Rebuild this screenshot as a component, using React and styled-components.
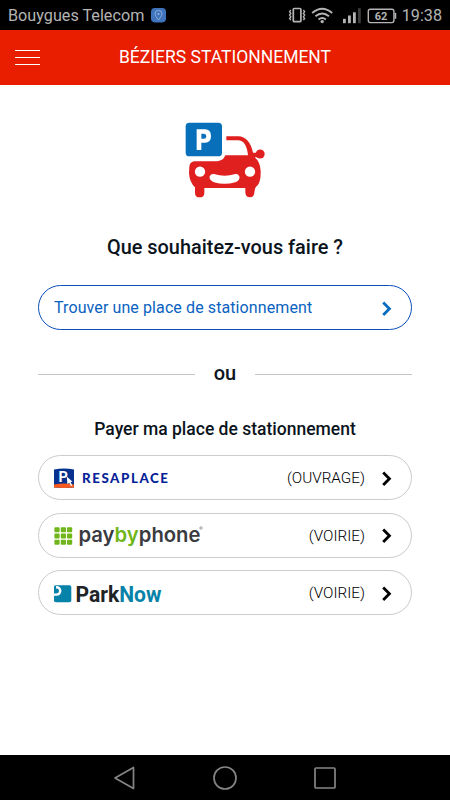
import React from 'react'
import styled, { createGlobalStyle } from 'styled-components'

const red = '#e91d00'
const blue = '#0a4fb8'
const ink = '#0b141c'
const silver = '#b4b4b4'

const GlobalStyle = createGlobalStyle`
  * {
    box-sizing: border-box;
  }

  body {
    margin: 0;
    background: #fff;
    font-family: Roboto, 'Liberation Sans', sans-serif;
  }

  svg {
    display: block;
    flex: none;
  }
`

const Screen = styled.div`
  display: flex;
  flex-direction: column;
  width: 450px;
  height: 800px;
  overflow: hidden;
`

const StatusBar = styled.div`
  display: flex;
  align-items: center;
  height: 30px;
  padding: 1px 8px 0;
  background: #000;
  color: ${silver};
`

const Carrier = styled.span`
  margin-right: 7px;
  font-size: 16.2px;
  line-height: 29px;
`

const StatusIcons = styled.div`
  display: flex;
  align-items: center;
  margin-left: auto;
`

const Clock = styled.span`
  margin-left: 4px;
  font-size: 16.2px;
  line-height: 29px;
`

const Header = styled.header`
  display: grid;
  grid-template-columns: 40px 1fr 40px;
  align-items: center;
  height: 55px;
  padding: 0 15px;
  background: ${red};
`

const Burger = styled.button`
  display: flex;
  flex-direction: column;
  justify-content: space-between;
  width: 25px;
  height: 15px;
  padding: 0;
  border: 0;
  background: none;
`

const BurgerLine = styled.span`
  height: 1px;
  background: #fff;
`

const Title = styled.h1`
  margin: -1px 0 0;
  color: #fff;
  font-size: 17.5px;
  font-weight: 400;
  line-height: 24px;
  text-align: center;
  white-space: nowrap;
`

const Content = styled.main`
  display: flex;
  flex: 1;
  flex-direction: column;
  align-items: center;
  padding: 25px 38px 0;
`

const Question = styled.h2`
  margin: 25px 0 24px;
  color: ${ink};
  font-size: 19.9px;
  font-weight: 500;
  line-height: 26px;
  white-space: nowrap;
`

const Pill = styled.button`
  display: flex;
  align-items: center;
  justify-content: space-between;
  width: 374px;
  height: 45px;
  padding: 0 18px 0 15px;
  border: 1px solid ${p => (p.$primary ? blue : '#cbcbcb')};
  border-radius: 23px;
  background: #fff;
  color: ${p => (p.$primary ? '#0a62c0' : '#111')};
  font-family: inherit;
`

const PillLabel = styled.span`
  font-size: 16px;
  letter-spacing: 0.1px;
  white-space: nowrap;
`

const Kind = styled.span`
  margin: 1px 16px 0 auto;
  color: #000;
  font-size: 15.3px;
  font-weight: 300;
`

const Separator = styled.div`
  display: flex;
  align-items: center;
  width: 100%;
  margin-top: 30px;
  color: ${ink};
  font-size: 20px;
  font-weight: 500;
  line-height: 26px;
`

const Rule = styled.span`
  flex: 1;
  height: 1px;
  margin-top: 2px;
  background: #c4c4c4;
`

const Or = styled.span`
  width: 60px;
  text-align: center;
`

const Subtitle = styled.h3`
  margin: 31px 0 14px;
  color: ${ink};
  font-size: 17.5px;
  font-weight: 500;
  line-height: 24px;
  white-space: nowrap;
`

const Providers = styled.div`
  display: flex;
  flex-direction: column;
  gap: 12.5px;
`

const NavBar = styled.nav`
  display: flex;
  align-items: center;
  justify-content: center;
  gap: 76px;
  height: 45px;
  background: #000;
`

const Chevron = ({ color = '#000' }) => (
  <svg width="12" height="16" viewBox="0 0 12 16">
    <path d="M2.2 2.6 L8.4 8.8 L2.2 15" fill="none" stroke={color} strokeWidth="2.8" />
  </svg>
)

const PinBadge = () => (
  <svg width="15" height="15" viewBox="0 0 15 15">
    <rect width="15" height="14.4" rx="3.8" fill="#3f74bd" />
    <path
      d="M7.5 12 C5.7 9.4 4 7.6 4 5.9 a3.5 3.5 0 0 1 7 0 C11 7.6 9.3 9.4 7.5 12 Z"
      fill="none"
      stroke="#9dbbe0"
      strokeWidth="0.8"
    />
    <circle cx="7.5" cy="6" r="1" fill="#9dbbe0" />
  </svg>
)

// vibrate, wifi, signal and battery
const PhoneStatus = () => (
  <svg width="110" height="20" viewBox="0 0 110 20" fill="none" stroke={silver}>
    <rect x="5.3" y="2.5" width="7.6" height="13.2" rx="1" strokeWidth="1.7" />
    <path d="M2.8 4 l-1.2 1.7 1.2 1.7 -1.2 1.7 1.2 1.7 -1.2 1.7 1.2 1.7" strokeWidth="1.4" />
    <path d="M15.4 4 l1.2 1.7 -1.2 1.7 1.2 1.7 -1.2 1.7 1.2 1.7 -1.2 1.7" strokeWidth="1.4" />
    <path
      d="M24.2 7 Q34.2 -1.7 44.2 7 M27.4 10.3 Q34.2 4.6 41 10.3 M30.5 13.4 Q34.2 10.4 37.9 13.4"
      strokeWidth="1.9"
    />
    <circle cx="34.2" cy="15.6" r="1.7" fill={silver} stroke="none" />
    <g fill={silver} stroke="none">
      <rect x="55" y="12.8" width="2.8" height="4.4" />
      <rect x="60" y="9.5" width="2.8" height="7.7" />
      <rect x="65" y="6.3" width="2.8" height="10.9" />
      <rect x="70" y="2.2" width="2.8" height="15" fill="#3c3c3c" />
    </g>
    <rect x="80.3" y="3.2" width="25.6" height="13.4" rx="2" strokeWidth="1.4" />
    <path d="M107.4 6.8 v6" strokeWidth="1.7" />
    <text
      x="93.1"
      y="13.8"
      fill={silver}
      stroke="none"
      fontSize="11"
      fontWeight="700"
      textAnchor="middle"
    >
      62
    </text>
  </svg>
)

const CarLogo = () => (
  <svg width="110" height="100" viewBox="0 0 330 300">
    <path
      d="M58 170 Q59 157 72 154 L142 154 Q160 152 166 136 L234 136 Q229 91 204 91 L169 91 L169 79 L205 79 Q238 80 249 128 L262 128 L262 142 L254 142 Q270 155 272 182 Q273 213 263 226 Q253 233 253 247 Q253 262 240 262 Q226 262 226 247 L226 234 L103 234 L103 248 Q103 262 89 262 Q75 262 75 248 L75 232 Q59 218 57 190 Z"
      fill="#e01f1f"
    />
    <circle cx="270.5" cy="132" r="13.5" fill="#e01f1f" />
    <circle cx="90" cy="185" r="15.5" fill="#fff" />
    <circle cx="240" cy="185" r="15.5" fill="#fff" />
    <path
      d="M132 192 Q164 203 196 192 Q205 191 208 199 Q211 211 196 217 Q164 226 132 217 Q116 210 119 199 Q123 190 132 192 Z"
      fill="#fff"
    />
    <rect x="47" y="38" width="109" height="101" rx="11" fill="#0870ba" />
    <path
      d="M80 58 H105 Q123 59 123 78 Q123 98 105 98 H94 V120 H80 Z M94 71 V86 H102 Q109 86 109 78.5 Q109 71 102 71 Z"
      fill="#fff"
      fillRule="evenodd"
    />
  </svg>
)

const ResaplaceLogo = () => (
  <svg width="118" height="24" viewBox="0 0 118 24">
    <path d="M0 3.5 Q10 1.5 20 3.5 V21.5 Q10 22.3 0 21.5 Z" fill="#06318f" />
    <path d="M0 18.5 Q10 16.6 20 18.5 V21.5 Q10 22.3 0 21.5 Z" fill="#fa5a1e" />
    <text x="4.5" y="15.8" fill="#fff" fontSize="14.5" fontWeight="700">
      P
    </text>
    <path
      d="M12.8 10.4 L18.5 15.7 L16.6 16 L18.3 19.4 L16.9 20.1 L15.2 16.7 L13.4 18.3 Z"
      fill="#fff"
    />
    <text
      x="28"
      y="17.4"
      fill="#071f97"
      fontFamily="Lato, sans-serif"
      fontSize="13.3"
      fontWeight="900"
      textLength="86"
    >
      RESAPLACE
    </text>
  </svg>
)

const PayByPhoneLogo = () => (
  <svg width="152" height="32" viewBox="0 -4 152 32">
    <g fill="#70b519">
      {[4.2, 10.5, 16.7].map(y =>
        [0.4, 6.8, 13].map(x => <rect key={`${x}-${y}`} x={x} y={y} width="5.2" height="5" rx="0.9" />)
      )}
    </g>
    <text
      x="24.5"
      y="18.8"
      fill="#393b3f"
      fontFamily="Inter, sans-serif"
      fontSize="20.5"
      fontWeight="600"
      textLength="122"
      lengthAdjust="spacingAndGlyphs"
    >
      pay
      <tspan fill="#70b519">by</tspan>
      phone
    </text>
    <circle cx="147" cy="5" r="1.2" fill="none" stroke="#888" strokeWidth="0.8" />
  </svg>
)

const ParkNowLogo = () => (
  <svg width="110" height="28" viewBox="0 -2 110 28">
    <rect y="4.2" width="17.3" height="17" rx="1.8" fill="#0782a8" />
    <path d="M0 6.3 H2.6 A3.6 3.6 0 0 1 2.6 13.6 H0" fill="none" stroke="#fff" strokeWidth="2.4" />
    <path d="M0 5 H2 V12 H0 Z" fill="#0782a8" />
    <text
      x="21.5"
      y="20.8"
      fill="#202326"
      fontSize="22.5"
      fontWeight="700"
      textLength="86"
      lengthAdjust="spacingAndGlyphs"
    >
      Park
      <tspan fill="#0782a8">Now</tspan>
    </text>
  </svg>
)

const providers = [
  { name: 'resaplace', kind: '(OUVRAGE)', Logo: ResaplaceLogo },
  { name: 'paybyphone', kind: '(VOIRIE)', Logo: PayByPhoneLogo },
  { name: 'parknow', kind: '(VOIRIE)', Logo: ParkNowLogo }
]

const NavIcon = ({ children }) => (
  <svg width="24" height="24" viewBox="0 0 24 24" fill="none" stroke="#858585" strokeWidth="1.7">
    {children}
  </svg>
)

const App = () => (
  <Screen>
    <GlobalStyle />
    <StatusBar>
      <Carrier>Bouygues Telecom</Carrier>
      <PinBadge />
      <StatusIcons>
        <PhoneStatus />
        <Clock>19:38</Clock>
      </StatusIcons>
    </StatusBar>
    <Header>
      <Burger aria-label="Menu">
        <BurgerLine />
        <BurgerLine />
        <BurgerLine />
      </Burger>
      <Title>BÉZIERS STATIONNEMENT</Title>
    </Header>
    <Content>
      <CarLogo />
      <Question>Que souhaitez-vous faire ?</Question>
      <Pill $primary>
        <PillLabel>Trouver une place de stationnement</PillLabel>
        <Chevron color="#0a6cc0" />
      </Pill>
      <Separator>
        <Rule />
        <Or>ou</Or>
        <Rule />
      </Separator>
      <Subtitle>Payer ma place de stationnement</Subtitle>
      <Providers>
        {providers.map(({ name, kind, Logo }) => (
          <Pill key={name}>
            <Logo />
            <Kind>{kind}</Kind>
            <Chevron />
          </Pill>
        ))}
      </Providers>
    </Content>
    <NavBar>
      <NavIcon>
        <path d="M2 12 L20.5 1.5 V22.5 Z" strokeLinejoin="round" />
      </NavIcon>
      <NavIcon>
        <circle cx="12" cy="12" r="11" />
      </NavIcon>
      <NavIcon>
        <rect x="2" y="2" width="20" height="20" rx="1" />
      </NavIcon>
    </NavBar>
  </Screen>
)

export default App
